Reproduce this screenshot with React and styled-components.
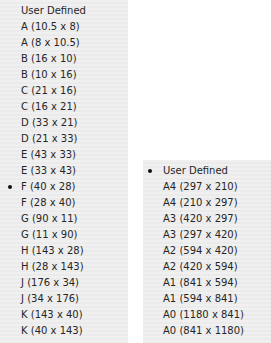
import React from 'react';
import styled, {createGlobalStyle} from 'styled-components';

const GlobalStyle = createGlobalStyle`
	html, body {
		margin: 0;
		padding: 0;
		background: #ffffff;
	}
	body {
		font-family: 'DejaVu Sans', 'Liberation Sans', sans-serif;
	}
`;

const ansiSizes = [
	'A (10.5 x 8)',
	'A (8 x 10.5)',
	'B (16 x 10)',
	'B (10 x 16)',
	'C (21 x 16)',
	'C (16 x 21)',
	'D (33 x 21)',
	'D (21 x 33)',
	'E (43 x 33)',
	'E (33 x 43)',
	'F (40 x 28)',
	'F (28 x 40)',
	'G (90 x 11)',
	'G (11 x 90)',
	'H (143 x 28)',
	'H (28 x 143)',
	'J (176 x 34)',
	'J (34 x 176)',
	'K (143 x 40)',
	'K (40 x 143)',
];

const isoSizes = [
	'A4 (297 x 210)',
	'A4 (210 x 297)',
	'A3 (420 x 297)',
	'A3 (297 x 420)',
	'A2 (594 x 420)',
	'A2 (420 x 594)',
	'A1 (841 x 594)',
	'A1 (594 x 841)',
	'A0 (1180 x 841)',
	'A0 (841 x 1180)',
];

function SizeMenu({items, selected, markWidth, dotOffset, className}) {
	return (
		<Menu className={className}>
			{['User Defined', ...items].map((label) => (
				<Item key={label}>
					<Mark $width={markWidth}>
						{label === selected && <Dot $offset={dotOffset} />}
					</Mark>
					<Label>{label}</Label>
				</Item>
			))}
		</Menu>
	);
}

export default function App() {
	return (
		<Page>
			<GlobalStyle />
			<LeftMenu
				items={ansiSizes}
				selected="F (40 x 28)"
				markWidth={21}
				dotOffset={8}
			/>
			<RightMenu
				items={isoSizes}
				selected="User Defined"
				markWidth={20}
				dotOffset={5}
			/>
		</Page>
	);
}

const Page = styled.div`
	display: flex;
	align-items: flex-start;
	width: 271px;
	height: 343px;
	overflow: hidden;
`;

const Menu = styled.div`
	display: flex;
	flex-direction: column;
	padding-top: 3px;
	box-sizing: border-box;
	background: repeating-linear-gradient(
		to bottom,
		#f0f0f0 0px,
		#f0f0f0 2px,
		#ebebeb 2px,
		#ebebeb 4px
	);
`;

const LeftMenu = styled(SizeMenu)`
	width: 128px;
	height: 343px;
	flex: none;
`;

const RightMenu = styled(SizeMenu)`
	flex: 1;
	margin-left: 15px;
	margin-top: 160px;
	height: 183px;
`;

const Item = styled.div`
	display: flex;
	align-items: center;
	height: 16px;
	font-size: 10px;
	color: #262626;
	white-space: nowrap;
`;

const Mark = styled.span`
	display: flex;
	align-items: center;
	width: ${({$width}) => $width}px;
	flex: none;
`;

const Dot = styled.i`
	display: block;
	width: 4px;
	height: 4px;
	margin-left: ${({$offset}) => $offset}px;
	border-radius: 50%;
	background: #111111;
`;

const Label = styled.span`
	line-height: 16px;
`;
